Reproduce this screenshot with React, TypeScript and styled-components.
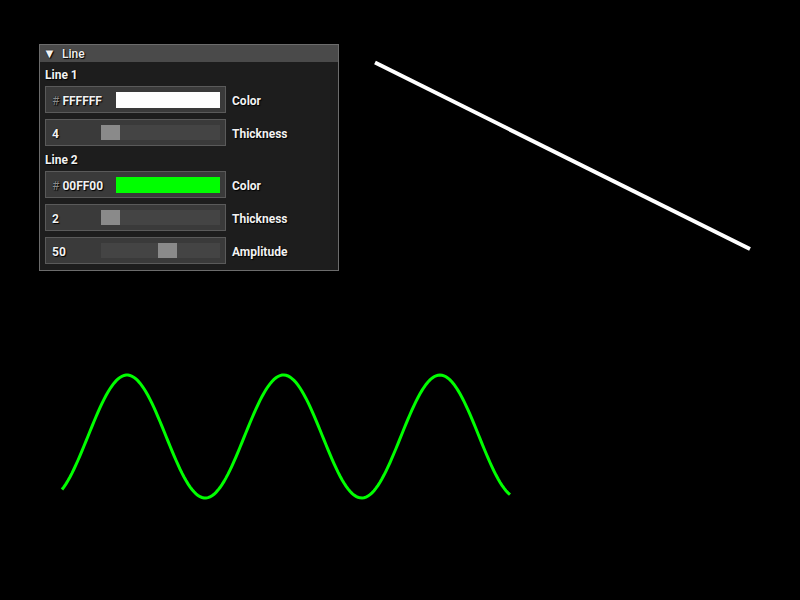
import styled, { createGlobalStyle } from "styled-components";

const GlobalStyle = createGlobalStyle`
  html, body {
    margin: 0;
    padding: 0;
    background: #000;
    width: 800px;
    height: 600px;
    overflow: hidden;
  }
  * { box-sizing: border-box; }
`;

const Stage = styled.div`
  position: relative;
  width: 800px;
  height: 600px;
  background: #000;
`;

const Canvas = styled.svg`
  position: absolute;
  left: 0;
  top: 0;
`;

// panel floats over the drawing canvas
const Panel = styled.div`
  position: absolute;
  left: 39px;
  top: 44px;
  width: 300px;
  border: 1px solid #6c6c6c;
  background: #1d1d1d;
  font-family: Roboto, "Liberation Sans", sans-serif;
  font-size: 12px;
  font-weight: 700;
  color: #f2f2f2;
  text-shadow: 1px 1px 1px #000, 0 0 1px #000;
`;

const Header = styled.div`
  height: 17px;
  background: #4a4a4a;
  display: flex;
  align-items: center;
  padding-left: 3px;
  gap: 7px;
  font-weight: 500;
`;

const Arrow = styled.span`
  font-size: 13px;
  width: 12px;
  line-height: 1;
`;

const Text = styled.span`
  display: inline-block;
  padding-top: 2px;
`;

const Title = styled.span``;

const Body = styled.div`
  padding: 2px 5px 6px;
`;

const Section = styled.div<{ $first?: boolean }>`
  display: flex;
  flex-direction: column;
  margin-top: ${({ $first }) => ($first ? "0" : "3px")};
`;

const SectionLabel = styled.div`
  height: 20px;
  line-height: 20px;
  padding-top: 1px;
  margin-bottom: 2px;
`;

const Row = styled.div<{ $first?: boolean }>`
  display: flex;
  align-items: center;
  gap: 6px;
  margin-top: ${({ $first }) => ($first ? "0" : "6px")};
`;

const Field = styled.div`
  width: 181px;
  height: 27px;
  border: 1px solid #5a5a5a;
  background: #3a3a3a;
  display: flex;
  align-items: center;
  padding: 0 5px 0 6px;
`;

const Hash = styled(Text)`
  color: #8a8a8a;
  font-weight: 400;
  margin-right: 3px;
`;

const HexText = styled(Text)`
  width: 54px;
`;

const Swatch = styled.div<{ $color: string }>`
  flex: 1;
  height: 16px;
  background: ${({ $color }) => $color};
`;

const Value = styled(Text)`
  width: 49px;
`;

const Track = styled.div`
  position: relative;
  flex: 1;
  height: 15px;
  background: #444;
`;

const Handle = styled.div<{ $pos: number }>`
  position: absolute;
  top: 0;
  left: ${({ $pos }) => $pos}px;
  width: 19px;
  height: 15px;
  background: #8a8a8a;
`;

const ColorRow = ({ hex, color, first }: { hex: string; color: string; first?: boolean }) => (
  <Row $first={first}>
    <Field>
      <Hash>#</Hash>
      <HexText>{hex}</HexText>
      <Swatch $color={color} />
    </Field>
    <Text>Color</Text>
  </Row>
);

const SliderRow = ({ value, pos, label }: { value: string; pos: number; label: string }) => (
  <Row>
    <Field>
      <Value>{value}</Value>
      <Track>
        <Handle $pos={pos} />
      </Track>
    </Field>
    <Text>{label}</Text>
  </Row>
);

function sinePath() {
  const pts: string[] = [];
  for (let x = 62; x <= 510; x += 2) {
    const y = 436.5 - 61.5 * Math.cos((2 * Math.PI * (x - 127)) / 156.5);
    pts.push(`${x},${y.toFixed(2)}`);
  }
  return "M" + pts.join(" L");
}

export default function App() {
  return (
    <Stage>
      <GlobalStyle />
      <Canvas width={800} height={600}>
        <line x1={375} y1={62.5} x2={750} y2={249} stroke="#fff" strokeWidth={4} />
        <path d={sinePath()} fill="none" stroke="#00ff00" strokeWidth={3} />
      </Canvas>

      <Panel>
        <Header>
          <Arrow>▼</Arrow>
          <Title>Line</Title>
        </Header>
        <Body>
          <Section $first>
            <SectionLabel>Line 1</SectionLabel>
            <ColorRow hex="FFFFFF" color="#ffffff" first />
            <SliderRow value="4" pos={0} label="Thickness" />
          </Section>
          <Section>
            <SectionLabel>Line 2</SectionLabel>
            <ColorRow hex="00FF00" color="#00ff00" first />
            <SliderRow value="2" pos={0} label="Thickness" />
            <SliderRow value="50" pos={57} label="Amplitude" />
          </Section>
        </Body>
      </Panel>
    </Stage>
  );
}
